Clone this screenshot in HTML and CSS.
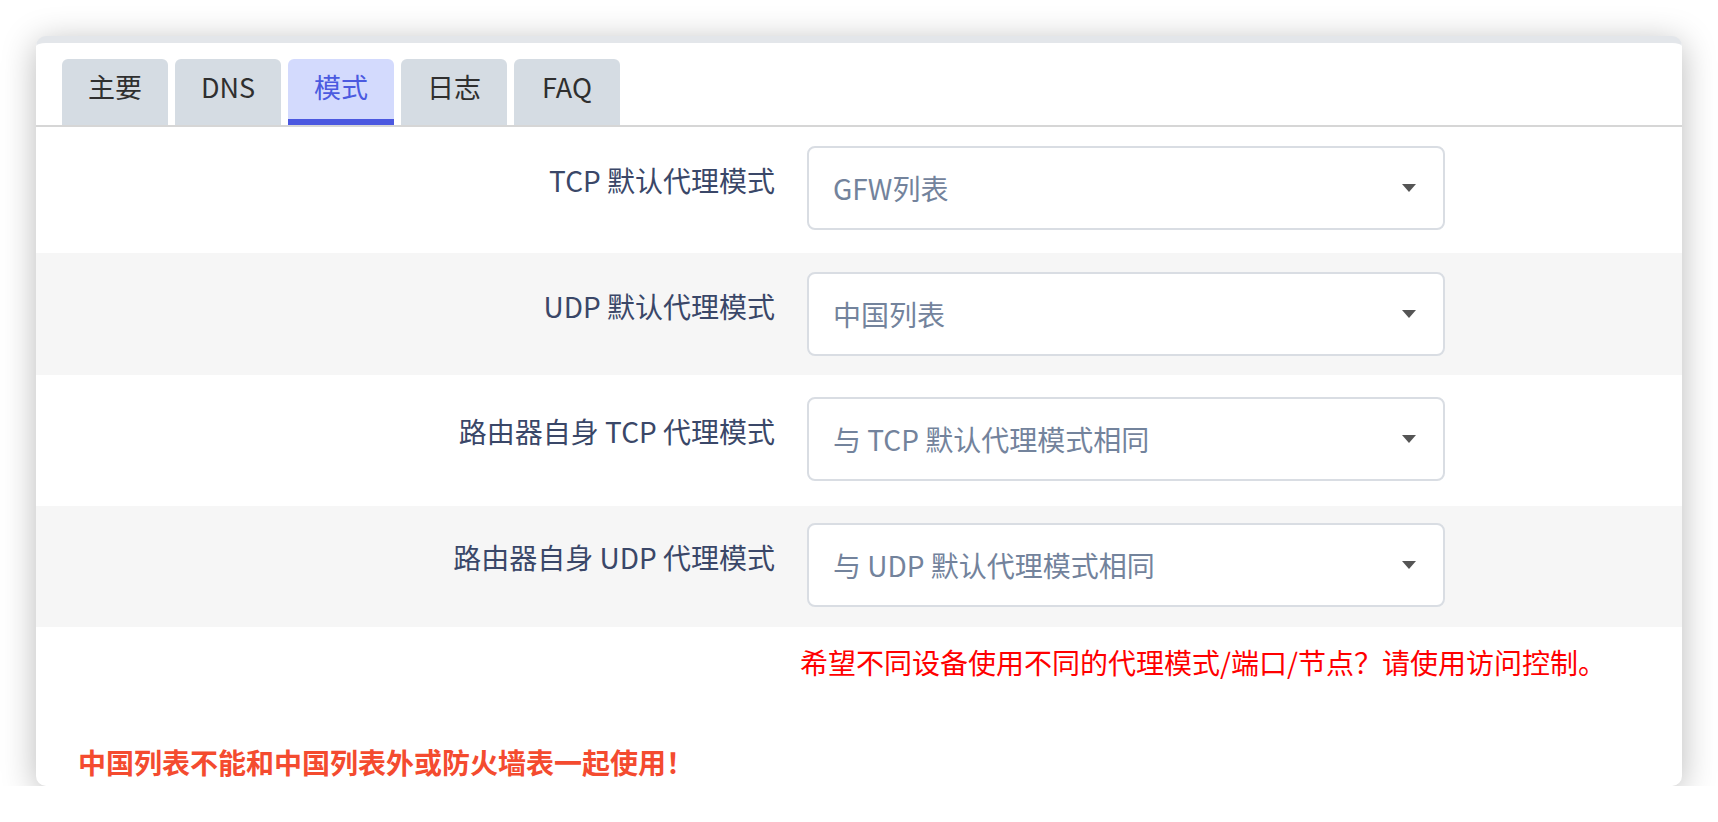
FILE: index.html
```html
<!DOCTYPE html>
<html lang="zh-CN">
<head>
<meta charset="utf-8">
<title>模式</title>
<link rel="stylesheet" href="styles.css">
</head>
<body>
<div class="card">
  <div class="tabs">
    <div class="tab">主要</div>
    <div class="tab">DNS</div>
    <div class="tab tab-active">模式</div>
    <div class="tab">日志</div>
    <div class="tab">FAQ</div>
  </div>
  <div class="row row-a">
    <div class="label">TCP 默认代理模式</div>
    <div class="select"><span>GFW列表</span><i class="caret"></i></div>
  </div>
  <div class="row row-b alt">
    <div class="label">UDP 默认代理模式</div>
    <div class="select"><span>中国列表</span><i class="caret"></i></div>
  </div>
  <div class="row row-c">
    <div class="label">路由器自身 TCP 代理模式</div>
    <div class="select"><span>与 TCP 默认代理模式相同</span><i class="caret"></i></div>
  </div>
  <div class="row row-d alt">
    <div class="label">路由器自身 UDP 代理模式</div>
    <div class="select"><span>与 UDP 默认代理模式相同</span><i class="caret"></i></div>
  </div>
  <div class="hint">希望不同设备使用不同的代理模式/端口/节点？请使用访问控制。</div>
  <div class="warning">中国列表不能和中国列表外或防火墙表一起使用！</div>
</div>
</body>
</html>
```
FILE: styles.css
```css
html, body {
  margin: 0;
  padding: 0;
  background: #ffffff;
}
body {
  padding: 36px 0 0 36px;
  font-family: Inter, "Noto Sans CJK SC", sans-serif;
}
.card {
  box-sizing: border-box;
  width: 1646px;
  height: 750px;
  background: #ffffff;
  border-top: 7px solid #e3e6ea;
  border-radius: 10px;
  box-shadow: 0 6px 34px rgba(0, 0, 0, 0.28);
  overflow: hidden;
}
.tabs {
  display: flex;
  gap: 7px;
  padding: 16px 0 0 26px;
  border-bottom: 2px solid #d6d6d6;
}
.tab {
  box-sizing: border-box;
  width: 106px;
  height: 66px;
  padding-top: 8px;
  background: #d5dce3;
  border-radius: 6px 6px 0 0;
  border-bottom: 6px solid transparent;
  color: #2f2f2f;
  font-size: 27px;
  line-height: 40px;
  text-align: center;
  font-family: "Noto Sans CJK SC", sans-serif;
}
.tab-active {
  background: #d3dafd;
  color: #4b5ae0;
  border-bottom-color: #4b58e0;
}
.row {
  display: flex;
  align-items: flex-start;
  gap: 32px;
}
.alt {
  background: #f6f6f6;
}
.row-a { padding: 19px 0 23px; }
.row-b { padding: 19px 0 19px; }
.row-c { padding: 22px 0 25px; }
.row-d { padding: 17px 0 20px; }
.label {
  width: 739px;
  padding-top: 14px;
  text-align: right;
  color: #3a4768;
  font-size: 28px;
  line-height: 40px;
  font-family: "Noto Sans CJK SC", sans-serif;
}
.select {
  box-sizing: border-box;
  width: 638px;
  height: 84px;
  display: flex;
  align-items: center;
  justify-content: space-between;
  padding: 0 27px 0 24px;
  background: #ffffff;
  border: 2px solid #d9dde3;
  border-radius: 8px;
  color: #73839c;
  font-size: 28px;
  font-family: "Noto Sans CJK SC", sans-serif;
}
.caret {
  width: 0;
  height: 0;
  border-left: 7px solid transparent;
  border-right: 7px solid transparent;
  border-top: 8px solid #555555;
}
.hint {
  margin: 15px 0 0 764px;
  color: #ff0000;
  font-size: 28px;
  line-height: 40px;
  font-family: "Noto Sans CJK SC", sans-serif;
}
.warning {
  margin: 60px 0 0 42px;
  color: #f44b2f;
  font-weight: 700;
  font-size: 28px;
  line-height: 40px;
  font-family: "Noto Sans CJK SC", sans-serif;
}
```
